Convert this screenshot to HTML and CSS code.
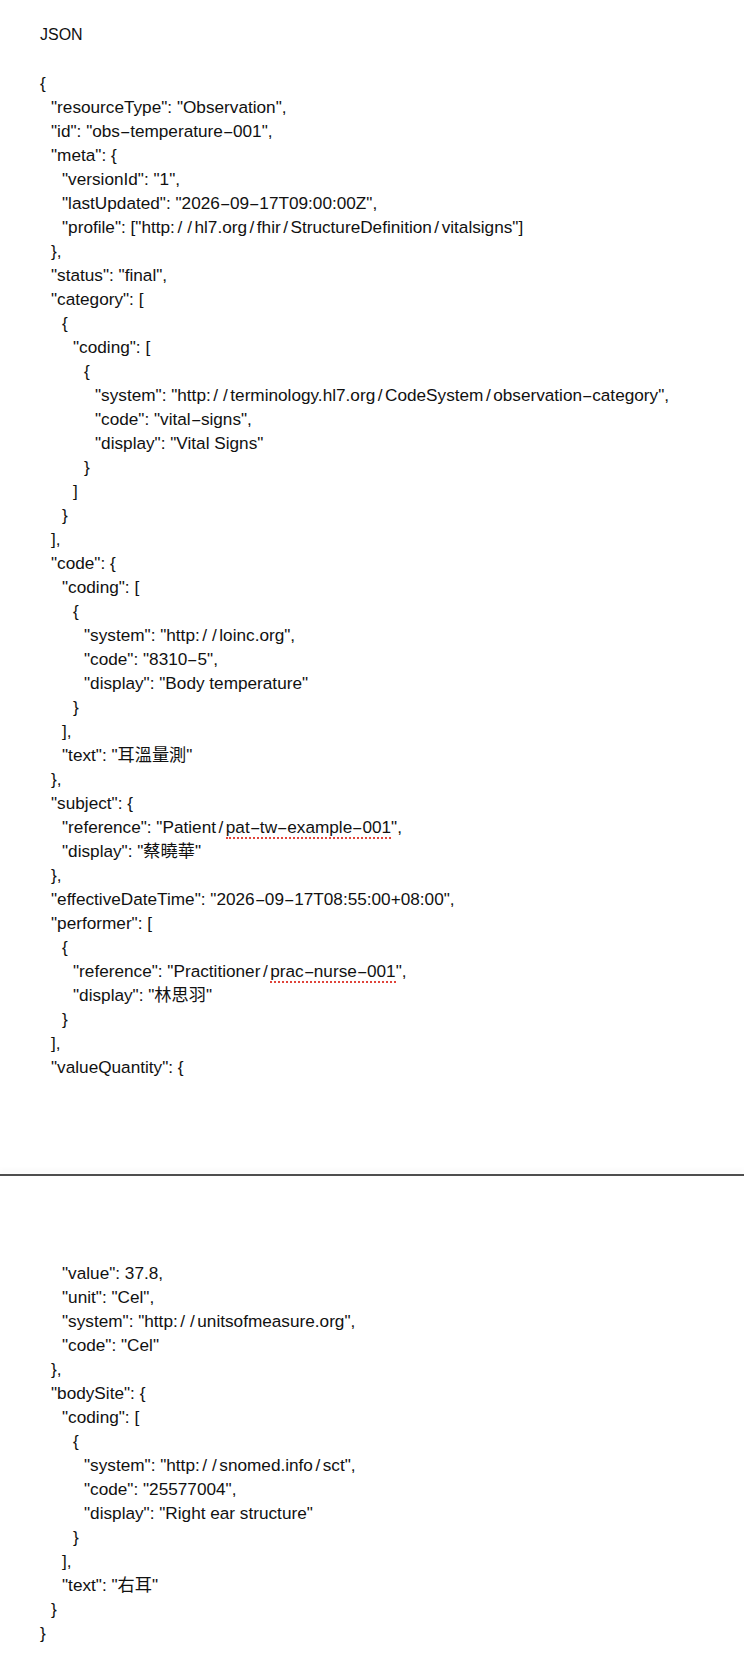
FILE: index.html
```html
<!DOCTYPE html>
<html lang="zh-Hant">
<head>
<meta charset="utf-8">
<title>JSON</title>
<link rel="stylesheet" href="styles.css">
</head>
<body>
<div class="page page-first">
  <div class="ln heading">JSON</div>
  <div class="ln blank"></div>
  <div class="ln l0">{</div>
  <div class="ln l1">"resourceType": "Observation",</div>
  <div class="ln l1">"id": "obs<span class="d">-</span>temperature<span class="d">-</span>001",</div>
  <div class="ln l1">"meta": {</div>
  <div class="ln l2">"versionId": "1",</div>
  <div class="ln l2">"lastUpdated": "2026<span class="d">-</span>09<span class="d">-</span>17T09:00:00Z",</div>
  <div class="ln l2">"profile": ["http:<span class="s">/</span><span class="s">/</span>hl7.org<span class="s">/</span>fhir<span class="s">/</span>StructureDefinition<span class="s">/</span>vitalsigns"]</div>
  <div class="ln l1">},</div>
  <div class="ln l1">"status": "final",</div>
  <div class="ln l1">"category": [</div>
  <div class="ln l2">{</div>
  <div class="ln l3">"coding": [</div>
  <div class="ln l4">{</div>
  <div class="ln l5">"system": "http:<span class="s">/</span><span class="s">/</span>terminology.hl7.org<span class="s">/</span>CodeSystem<span class="s">/</span>observation<span class="d">-</span>category",</div>
  <div class="ln l5">"code": "vital<span class="d">-</span>signs",</div>
  <div class="ln l5">"display": "Vital Signs"</div>
  <div class="ln l4">}</div>
  <div class="ln l3">]</div>
  <div class="ln l2">}</div>
  <div class="ln l1">],</div>
  <div class="ln l1">"code": {</div>
  <div class="ln l2">"coding": [</div>
  <div class="ln l3">{</div>
  <div class="ln l4">"system": "http:<span class="s">/</span><span class="s">/</span>loinc.org",</div>
  <div class="ln l4">"code": "8310<span class="d">-</span>5",</div>
  <div class="ln l4">"display": "Body temperature"</div>
  <div class="ln l3">}</div>
  <div class="ln l2">],</div>
  <div class="ln l2">"text": "耳溫量測"</div>
  <div class="ln l1">},</div>
  <div class="ln l1">"subject": {</div>
  <div class="ln l2">"reference": "Patient<span class="s">/</span><span class="spell">pat<span class="d">-</span>tw<span class="d">-</span>example<span class="d">-</span>001</span>",</div>
  <div class="ln l2">"display": "蔡曉華"</div>
  <div class="ln l1">},</div>
  <div class="ln l1">"effectiveDateTime": "2026<span class="d">-</span>09<span class="d">-</span>17T08:55:00+08:00",</div>
  <div class="ln l1">"performer": [</div>
  <div class="ln l2">{</div>
  <div class="ln l3">"reference": "Practitioner<span class="s">/</span><span class="spell">prac<span class="d">-</span>nurse<span class="d">-</span>001</span>",</div>
  <div class="ln l3">"display": "林思羽"</div>
  <div class="ln l2">}</div>
  <div class="ln l1">],</div>
  <div class="ln l1">"valueQuantity": {</div>
</div>
<div class="page-break"></div>
<div class="page page-second">
  <div class="ln l2">"value": 37.8,</div>
  <div class="ln l2">"unit": "Cel",</div>
  <div class="ln l2">"system": "http:<span class="s">/</span><span class="s">/</span>unitsofmeasure.org",</div>
  <div class="ln l2">"code": "Cel"</div>
  <div class="ln l1">},</div>
  <div class="ln l1">"bodySite": {</div>
  <div class="ln l2">"coding": [</div>
  <div class="ln l3">{</div>
  <div class="ln l4">"system": "http:<span class="s">/</span><span class="s">/</span>snomed.info<span class="s">/</span>sct",</div>
  <div class="ln l4">"code": "25577004",</div>
  <div class="ln l4">"display": "Right ear structure"</div>
  <div class="ln l3">}</div>
  <div class="ln l2">],</div>
  <div class="ln l2">"text": "右耳"</div>
  <div class="ln l1">}</div>
  <div class="ln l0">}</div>
</div>
</body>
</html>
```
FILE: styles.css
```css
html, body {
  margin: 0;
  padding: 0;
  background: #ffffff;
}
body {
  font-family: "Liberation Sans", "Noto Sans CJK TC", sans-serif;
  color: #111111;
  font-size: 17.2px;
  line-height: 24px;
}
.page {
  box-sizing: border-box;
  padding-left: 40px;
}
.page-first {
  height: 1174px;
  padding-top: 23px;
}
.page-second {
  padding-top: 85px;
  padding-bottom: 15px;
}
.page-break {
  height: 2px;
  background: #4f4f4f;
  box-shadow: 0 -4px 5px rgba(0, 0, 0, 0.05);
}
.ln {
  height: 24px;
  white-space: pre;
}
.heading {
  font-size: 16px;
}
.l0 { padding-left: 0; }
.l1 { padding-left: 11px; }
.l2 { padding-left: 22px; }
.l3 { padding-left: 33px; }
.l4 { padding-left: 44px; }
.l5 { padding-left: 55px; }

/* wide dash glyph of the source font */
.d {
  display: inline-block;
  width: 10.2px;
  text-align: center;
  transform: scaleX(1.9);
}
/* slightly roomier slash */
.s {
  padding: 0 2.5px;
}
.spell {
  border-bottom: 2px dotted #e0443a;
}
```
